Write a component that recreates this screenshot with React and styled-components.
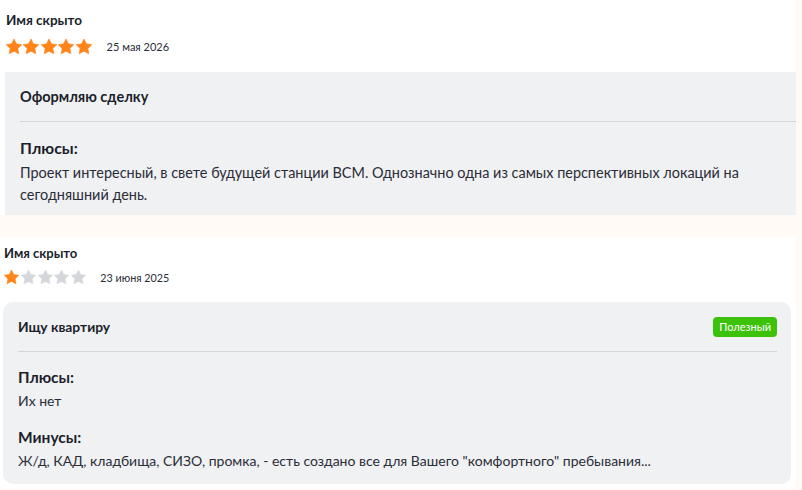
import React from 'react';
import styled, { createGlobalStyle } from 'styled-components';

const GlobalStyle = createGlobalStyle`
  html, body {
    margin: 0;
    padding: 0;
    background: #fffaf6;
  }
  body {
    font-family: Lato, "Noto Sans", "Open Sans", sans-serif;
    color: #22252f;
  }
`;

const Page = styled.div`
  width: 796px;
  display: flex;
  flex-direction: column;
  gap: 22px;
`;

const Review = styled.section`
  background: #ffffff;
  padding: ${(p) => (p.$compact ? '8px 5px 5px 3px' : '12px 0 0 5px')};
  display: flex;
  flex-direction: column;
`;

const Author = styled.div`
  padding-left: 1px;
  font-size: ${(p) => (p.$compact ? '13px' : '13.5px')};
  line-height: 16px;
  font-weight: 700;
  color: #1c1f2b;
`;

const Meta = styled.div`
  display: flex;
  align-items: center;
  margin-top: ${(p) => (p.$compact ? '8px' : '10px')};
  padding-left: 1px;
  height: 16px;
`;

const Stars = styled.div`
  display: flex;
  gap: ${(p) => (p.$compact ? '1.8px' : '1.4px')};
`;

const DateText = styled.span`
  margin-left: ${(p) => (p.$compact ? '14px' : '15px')};
  font-size: ${(p) => (p.$compact ? '10.8px' : '11px')};
  color: #2a2d38;
`;

const Card = styled.div`
  margin-top: ${(p) => (p.$compact ? '17px' : '18px')};
  background: #f0f1f3;
  border-radius: ${(p) => (p.$compact ? '10px' : '0')};
  padding: ${(p) => (p.$compact ? '0 14px 12px 15px' : '0 0 9px 15px')};
`;

const CardHead = styled.div`
  height: 49px;
  display: flex;
  align-items: center;
  justify-content: space-between;
  border-bottom: 1px solid #d3d5da;
`;

const CardTitle = styled.h3`
  margin: 0;
  font-size: ${(p) => (p.$compact ? '13.8px' : '14.5px')};
  font-weight: 700;
  color: #1c1f2b;
`;

const Badge = styled.span`
  height: 20px;
  padding: 0 6px;
  display: inline-flex;
  align-items: center;
  border-radius: 4px;
  background: #3dc20b;
  color: #ffffff;
  font-size: 11px;
`;

const Block = styled.div`
  margin-top: ${(p) => p.$gap}px;
`;

const BlockTitle = styled.h4`
  margin: 0;
  font-size: ${(p) => (p.$compact ? '15.5px' : '16px')};
  line-height: 22px;
  font-weight: 700;
  color: #1c1f2b;
`;

const BlockText = styled.p`
  margin: ${(p) => (p.$compact ? '2px' : '3px')} 0 0;
  font-size: ${(p) => (p.$compact ? '14px' : '14.45px')};
  line-height: 22px;
  color: #2a2d38;
  padding-right: 30px;
`;

const Star = ({ filled, size }) => (
  <svg width={size} height={size - 1} viewBox="2 2 20 19.3">
    <path
      d="M12 2l3.09 6.26L22 9.27l-5 4.87 1.18 6.88L12 17.77l-6.18 3.25L7 14.14 2 9.27l6.91-1.01L12 2z"
      fill={filled ? '#ff851b' : '#d5d7dc'}
      stroke={filled ? '#ff851b' : '#d5d7dc'}
      strokeWidth="0.8"
      strokeLinejoin="round"
    />
  </svg>
);

const reviews = [
  {
    id: 1,
    author: 'Имя скрыто',
    rating: 5,
    date: '25 мая 2026',
    title: 'Оформляю сделку',
    blocks: [
      {
        label: 'Плюсы:',
        text: 'Проект интересный, в свете будущей станции ВСМ. Однозначно одна из самых перспективных локаций на сегодняшний день.',
      },
    ],
  },
  {
    id: 2,
    compact: true,
    author: 'Имя скрыто',
    rating: 1,
    date: '23 июня 2025',
    title: 'Ищу квартиру',
    badge: 'Полезный',
    blocks: [
      { label: 'Плюсы:', text: 'Их нет' },
      {
        label: 'Минусы:',
        text: 'Ж/д, КАД, кладбища, СИЗО, промка, - есть создано все для Вашего "комфортного" пребывания...',
      },
    ],
  },
];

const App = () => {
  return (
    <>
      <GlobalStyle />
      <Page>
        {reviews.map((review) => {
          const c = review.compact;
          return (
            <Review key={review.id} $compact={c}>
              <Author $compact={c}>{review.author}</Author>
              <Meta $compact={c}>
                <Stars $compact={c}>
                  {[1, 2, 3, 4, 5].map((n) => (
                    <Star key={n} filled={n <= review.rating} size={c ? 15 : 16} />
                  ))}
                </Stars>
                <DateText $compact={c}>{review.date}</DateText>
              </Meta>
              <Card $compact={c}>
                <CardHead>
                  <CardTitle $compact={c}>{review.title}</CardTitle>
                  {review.badge && <Badge>{review.badge}</Badge>}
                </CardHead>
                {review.blocks.map((block, i) => (
                  <Block key={block.label} $gap={i === 0 ? (c ? 14 : 15) : 14}>
                    <BlockTitle $compact={c}>{block.label}</BlockTitle>
                    <BlockText $compact={c}>{block.text}</BlockText>
                  </Block>
                ))}
              </Card>
            </Review>
          );
        })}
      </Page>
    </>
  );
};

export default App;
